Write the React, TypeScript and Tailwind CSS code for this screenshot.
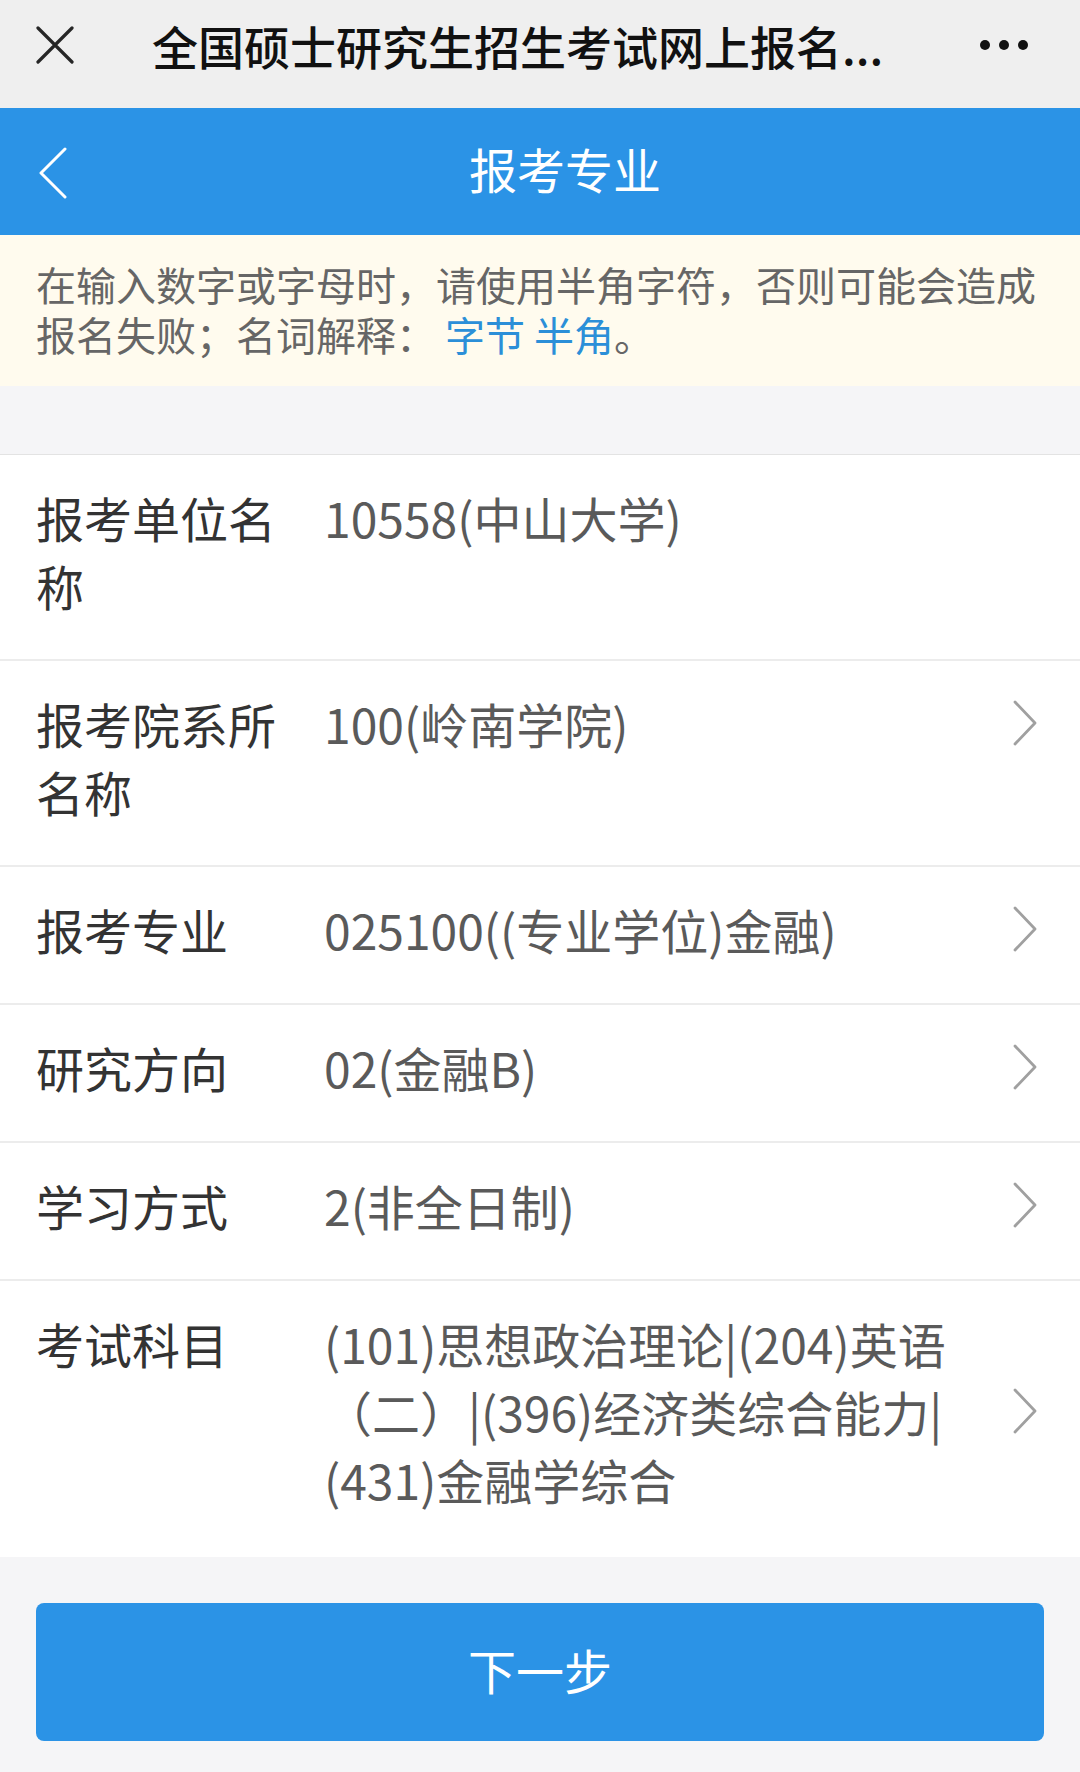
import React from "react";

const FONT = { fontFamily: '"Noto Sans CJK SC", "Noto Sans", sans-serif' };

function Chevron() {
  return (
    <svg width="24" height="46" viewBox="0 0 24 46" fill="none">
      <path d="M2 2 L22 23 L2 44" stroke="#a0a0a0" strokeWidth="2.8" strokeLinecap="round" strokeLinejoin="round" />
    </svg>
  );
}

type Row = { label: string; value: string; arrow: boolean; last?: boolean };

const rows: Row[] = [
  { label: "报考单位名称", value: "10558(中山大学)", arrow: false },
  { label: "报考院系所名称", value: "100(岭南学院)", arrow: true },
  { label: "报考专业", value: "025100((专业学位)金融)", arrow: true },
  { label: "研究方向", value: "02(金融B)", arrow: true },
  { label: "学习方式", value: "2(非全日制)", arrow: true },
  {
    label: "考试科目",
    value: "(101)思想政治理论|(204)英语（二）|(396)经济类综合能力|(431)金融学综合",
    arrow: true,
    last: true,
  },
];

export default function App() {
  return (
    <div className="w-[1080px] min-h-[1772px] bg-[#f5f5f7] flex flex-col" style={FONT}>
      {/* Top bar */}
      <div className="h-[108px] bg-[#efefef] flex items-center pb-[18px] pl-[36px] pr-[52px]">
        <svg width="38" height="38" viewBox="0 0 38 38" fill="none" className="shrink-0">
          <path d="M2 2 L36 36 M36 2 L2 36" stroke="#262626" strokeWidth="3.2" strokeLinecap="round" />
        </svg>
        <div className="ml-[78px] flex-1 text-[46px] leading-[60px] font-medium text-[#111] whitespace-nowrap">
          全国硕士研究生招生考试网上报名...
        </div>
        <div className="flex items-center gap-[9px] shrink-0">
          <span className="w-[10px] h-[10px] rounded-full bg-[#111]" />
          <span className="w-[10px] h-[10px] rounded-full bg-[#111]" />
          <span className="w-[10px] h-[10px] rounded-full bg-[#111]" />
        </div>
      </div>

      {/* Blue header */}
      <div className="h-[127px] bg-[#2b93e6] flex items-center px-[38px] relative">
        <svg width="30" height="52" viewBox="0 0 30 52" fill="none" className="shrink-0 mt-[2px]">
          <path d="M27 2 L3 26 L27 50" stroke="#ffffff" strokeWidth="3" strokeLinecap="round" strokeLinejoin="round" />
        </svg>
        <div className="absolute inset-0 flex items-center justify-center pl-[50px] pb-[8px] text-white text-[48px] leading-[60px]">
          报考专业
        </div>
      </div>

      {/* Notice */}
      <div className="bg-[#fffbee] pt-[24px] pb-[27px] px-[36px] text-[40px] leading-[50px] text-[#666]">
        在输入数字或字母时，请使用半角字符，否则可能会造成报名失败；名词解释： <span className="text-[#2b8fd8]">字节 半角</span>。
      </div>

      {/* Gap */}
      <div className="h-[69px] bg-[#f5f5f7] border-b border-[#e3e3e3]" />

      {/* Rows */}
      <div className="bg-white">
        {rows.map((r) => (
          <div
            key={r.label}
            className={
              r.last
                ? "flex items-start pl-[36px] pr-[43px] pt-[28px] pb-[44px]"
                : "flex items-start pl-[36px] pr-[43px] pt-[28px] pb-[40px] border-b-2 border-[#ececec]"
            }
          >
            <div className="w-[288px] pr-[36px] shrink-0 text-[48px] leading-[68px] text-[#333]">{r.label}</div>
            <div className="flex-1 min-w-0 flex items-center">
              <div className="flex-1 min-w-0 text-[48px] leading-[68px] text-[#5a5a5a]">{r.value}</div>
              <div className="w-[24px] ml-[22px] shrink-0 flex items-center">
                {r.arrow ? <Chevron /> : null}
              </div>
            </div>
          </div>
        ))}
      </div>

      {/* Button */}
      <div className="pt-[46px] pb-[31px] px-[36px] bg-[#f5f5f7]">
        <button className="w-full h-[138px] rounded-[8px] bg-[#2b93e6] text-white text-[48px] leading-[60px] flex items-center justify-center pb-[6px]">
          下一步
        </button>
      </div>
    </div>
  );
}
